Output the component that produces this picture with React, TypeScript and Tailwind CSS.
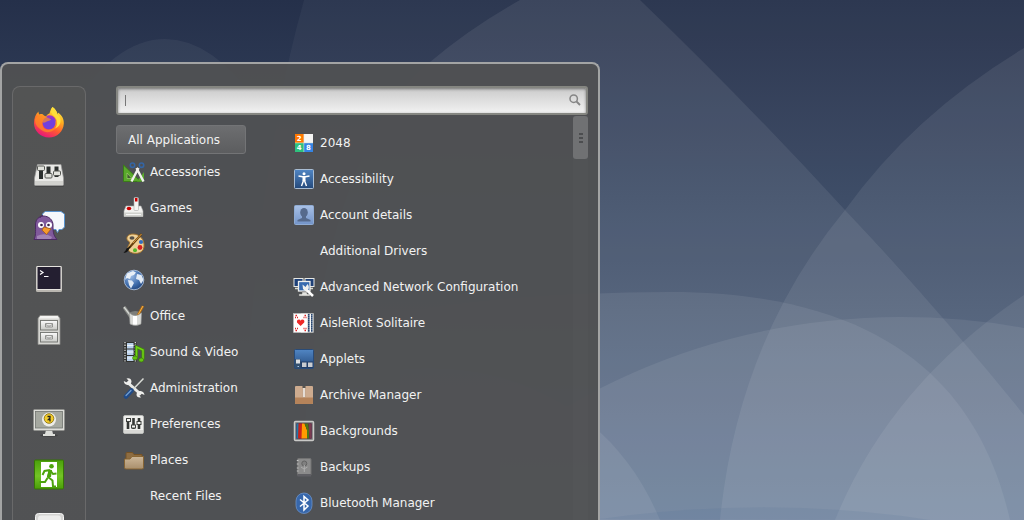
import type { ReactNode } from "react";

type Item = { label: string; icon?: ReactNode };

function Wallpaper() {
  return (
    <svg
      className="absolute inset-0 h-full w-full"
      viewBox="0 0 1024 520"
      preserveAspectRatio="none"
      aria-hidden="true"
    >
      <defs>
        <linearGradient id="sky" x1="0" y1="0" x2="0" y2="1">
          <stop offset="0" stopColor="#25304a" />
          <stop offset="0.38" stopColor="#374661" />
          <stop offset="0.6" stopColor="#42536e" />
          <stop offset="1" stopColor="#506788" />
        </linearGradient>
        <linearGradient id="steel" x1="0" y1="0" x2="0" y2="1">
          <stop offset="0" stopColor="#fafafa" />
          <stop offset="1" stopColor="#c9cac6" />
        </linearGradient>
        <linearGradient id="blue" x1="0" y1="0" x2="0" y2="1">
          <stop offset="0" stopColor="#5186c4" />
          <stop offset="1" stopColor="#24497b" />
        </linearGradient>
        <linearGradient id="pale" x1="0" y1="0" x2="0" y2="1">
          <stop offset="0" stopColor="#a9c1e6" />
          <stop offset="1" stopColor="#7394c9" />
        </linearGradient>
        <linearGradient id="fire" x1="0.8" y1="0" x2="0.3" y2="1">
          <stop offset="0" stopColor="#fff44f" />
          <stop offset="0.35" stopColor="#ffb01f" />
          <stop offset="0.65" stopColor="#ff5a30" />
          <stop offset="1" stopColor="#e5127f" />
        </linearGradient>
        <linearGradient id="green" x1="0" y1="0" x2="0" y2="1">
          <stop offset="0" stopColor="#4aa00a" />
          <stop offset="0.55" stopColor="#73c425" />
          <stop offset="1" stopColor="#4a9e08" />
        </linearGradient>
        <linearGradient id="folder" x1="0" y1="0" x2="0" y2="1">
          <stop offset="0" stopColor="#cdb799" />
          <stop offset="1" stopColor="#a98f6c" />
        </linearGradient>
        <radialGradient id="globe" cx="0.35" cy="0.3" r="0.8">
          <stop offset="0" stopColor="#9dbce6" />
          <stop offset="0.6" stopColor="#3f6cab" />
          <stop offset="1" stopColor="#1d3f75" />
        </radialGradient>
      </defs>
      <rect width="1024" height="520" fill="url(#sky)" />
      <g fill="#fff" fillOpacity="0.075">
        <path d="M304 0H1024V520H240Q250 190 304 0Z" fillOpacity="0.04" />
        <path d="M70 110Q115 39 165 39Q215 39 262 110Z" fillOpacity="0.05" />
        <path d="M520 0H640Q742 98 845 210Q936 306 1024 415V520H300Q310 160 430 62Q470 28 520 0Z" />
        <path d="M1024 48Q914 114 845 210Q738 340 720 520H1024Z" />
        <path d="M300 340Q430 293 670 292C910 292 985 410 1010 520H300Z" />
        <path d="M500 450Q680 318 900 317Q965 317 1024 328V520H500Z" />
        <path d="M1024 295Q890 385 835 520H1024Z" />
        <path d="M400 370C500 360 610 400 660 520H400Z" />
      </g>
      <path d="M600 519Q770 495 930 520Z" fill="#4d6c92" fillOpacity="0.12" />
    </svg>
  );
}

function Icon22({ children }: { children?: ReactNode }) {
  return (
    <svg className="size-[22px] shrink-0" viewBox="0 0 22 22" aria-hidden="true">
      {children}
    </svg>
  );
}

function Icon32({ children }: { children: ReactNode }) {
  return (
    <svg className="size-8 shrink-0" viewBox="0 0 32 32" aria-hidden="true">
      {children}
    </svg>
  );
}

const favorites: Item[] = [
  {
    label: "Firefox",
    icon: (
      <>
        <path
          d="M19.5 1C23 4 24 6 24.500 8.500C25 7.500 25 7 24.800 6.500C29 9 31 13 30.800 17.500C30.500 25.500 24 31.500 16 31.500C7.500 31.500 1 25 1 17C1 12 2.500 8.500 5.500 5.500C5.500 7 5.800 7.800 6.500 8.600C7.500 8 8.800 8 10 8.400C10.600 9 11 9.600 13 10.500C14.500 8 15.500 8 16.500 7.500C17 5 18 2.500 19.500 1Z"
          fill="url(#fire)"
        />
        <circle cx="16" cy="17" r="6.500" fill="#7140dd" />
        <path d="M13 10.200C18 7.500 23 11 23 16C21.500 13 18.500 11.500 16 12.500Z" fill="#9a35c8" />
        <path d="M2 13C5 9 10 9 13 10.500C14.500 12 17.500 12.500 18 13.500C17.500 15 14.500 14.500 13 16C11 17 10 17 9.500 16C8.500 21 12 24 15.500 23.700C19 23.500 21 22 24 20C21 27 12 28 7 23C3 20 2 17 2 13Z" fill="#ff8d24" fillOpacity="0.7" />
        <path d="M19.500 1C17 5 18 7.500 21 10C25 13.500 25 19 22 22.500C29 20 29 11.500 24.500 8.500C24 5.500 22.500 3 19.500 1Z" fill="#ffdf3a" />
      </>
    ),
  },
  {
    label: "Sound mixer",
    icon: (
      <>
        <rect x="2" y="27" width="29" height="2" rx="1" fill="#333" fillOpacity="0.4" />
        <path d="M4.500 6.500H28L30.500 20V26.500Q30.500 27.500 29.500 27.500H2.500Q1.500 27.500 1.500 26.500V20Z" fill="#e9e9e6" stroke="#999" strokeWidth="0.700" />
        <path d="M2 23H30V27H2Z" fill="#d2d2ce" />
        <path d="M8 10V21M15.500 8.500V19M23.500 8.500V19" stroke="#2c302f" strokeWidth="4" />
        <g fill="#e2e3dd" stroke="#555753" strokeWidth="1">
          <rect x="4.500" y="8" width="7" height="4.500" rx="1" />
          <rect x="12" y="15.500" width="7" height="4.500" rx="1" />
          <rect x="20.500" y="13" width="7" height="4.500" rx="1" />
        </g>
      </>
    ),
  },
  {
    label: "Pidgin",
    icon: (
      <>
        <path d="M12 1.500H28L31.500 4V17L29 19.500H26L24.500 22.500L23 19.500H12L9.500 16V4Z" fill="#f6f8fb" stroke="#5a94cf" strokeWidth="1" />
        <path d="M1 29.500C3 25 2.500 23 2.500 14C3 9 6 6.500 10 6C16 6 20 10 20 15C20 21 20 25 24 29.500Z" fill="#80599b" stroke="#4b2a63" strokeWidth="1" />
        <path d="M4 26Q12 22 19 27L18 29H4Z" fill="#a184b5" />
        <path d="M7 8Q7 5.500 10 5.500" stroke="#4b2a63" fill="none" />
        <circle cx="8" cy="15" r="3" fill="#fff" />
        <circle cx="16" cy="15" r="3" fill="#fff" />
        <circle cx="8.500" cy="15" r="1.300" fill="#3a2149" />
        <circle cx="15.500" cy="15" r="1.300" fill="#3a2149" />
        <path d="M11 17L18 19L13.500 24.500L9 20Z" fill="#f59a2e" stroke="#a85b09" strokeWidth="0.700" />
      </>
    ),
  },
  {
    label: "Terminal",
    icon: (
      <>
        <rect x="3" y="4" width="26" height="26" rx="1.500" fill="#b9b6b0" />
        <rect x="3.500" y="4" width="25" height="24" rx="1" fill="#e6e4df" />
        <rect x="4.500" y="5" width="23" height="22" fill="#241f31" />
        <path d="M7 8.500L10 10.500L7 12.500M11 14.500H15.500" fill="none" stroke="#fff" strokeWidth="1.200" />
      </>
    ),
  },
  {
    label: "Files",
    icon: (
      <>
        <path d="M7 1.500H25L27 4.500V30.500H5V4.500Z" fill="#d6d6d2" stroke="#8b8c88" strokeWidth="0.800" />
        <path d="M7.500 2H24.500L26 4.500H6Z" fill="#f3f3f1" />
        <g fill="url(#steel)" stroke="#70726e" strokeWidth="0.900">
          <rect x="7.500" y="6.500" width="17" height="9.500" />
          <rect x="7.500" y="18.500" width="17" height="9.500" />
        </g>
        <g fill="#eee" stroke="#80827e" strokeWidth="0.800">
          <path d="M12.500 9.500H19.500V13H12.500ZM12.500 10L14.500 12H17.500L19.500 10" />
          <path d="M12.500 21.500H19.500V25H12.500ZM12.500 22L14.500 24H17.500L19.500 22" />
        </g>
      </>
    ),
  },
];

const session: Item[] = [
  {
    label: "Lock screen",
    icon: (
      <>
        <ellipse cx="16" cy="29.500" rx="9" ry="1.500" fill="#222" fillOpacity="0.3" />
        <path d="M13 24H19L20 28H22V30H10V28H12Z" fill="#dddeda" />
        <rect x="0.500" y="3.500" width="31" height="21" rx="1" fill="#ddddd9" stroke="#8d8e8a" strokeWidth="0.800" />
        <rect x="2.500" y="5.500" width="27" height="16.500" fill="#a5a8a0" stroke="#727570" strokeWidth="0.800" />
        <circle cx="16" cy="13.500" r="7" fill="#edede9" />
        <circle cx="16" cy="12.500" r="4.800" fill="#f2cc2c" stroke="#8c7311" strokeWidth="0.900" />
        <path d="M14.500 10.500H17V12L15.500 13.500H17V15.500" fill="none" stroke="#222" strokeWidth="1.300" />
      </>
    ),
  },
  {
    label: "Log out",
    icon: (
      <>
        <rect x="1.500" y="2" width="29" height="29" rx="1" fill="url(#green)" stroke="#367506" />
        <rect x="8" y="4" width="16" height="25" fill="#fff" />
        <circle cx="18.500" cy="8.200" r="2.300" fill="#4da30d" />
        <path d="M17 12L11.500 13L9.500 17M17 12L15 19L19.500 22.500L20 28.500H23M17 12L20 16L23.500 15.500M14.500 20L12 24H6.500" fill="none" stroke="#4da30d" strokeWidth="2" />
        <path d="M15.500 12L19 12L18 19L14 19Z" fill="#4da30d" />
      </>
    ),
  },
  {
    label: "Shut down",
    icon: (
      <>
        <rect x="2.500" y="3.500" width="28" height="28" rx="3" fill="#d4d4d2" stroke="#f5f5f5" />
        <rect x="5" y="5.500" width="23" height="24" rx="3" fill="#ececeb" />
      </>
    ),
  },
];

const categories: Item[] = [
  {
    label: "Accessories",
    icon: (
      <>
        <path d="M0.500 4L17.500 20.500H0.500Z" fill="#59a92c" stroke="#3b7b18" />
        <path d="M14 20.500L21 11V20.500Z" fill="#59a92c" />
        <path d="M4 12L9 17.500H4Z" fill="#3f5d2e" stroke="#a1d06d" strokeWidth="0.700" />
        <path d="M13.500 7L20.500 20.500M15.500 7L8.500 20.500" stroke="#f0f0ee" strokeWidth="2.400" />
        <circle cx="9.500" cy="4.200" r="2.200" fill="none" stroke="#3465a4" strokeWidth="1.600" />
        <circle cx="18.500" cy="4.200" r="2.200" fill="none" stroke="#3465a4" strokeWidth="1.600" />
      </>
    ),
  },
  {
    label: "Games",
    icon: (
      <>
        <path d="M3 9H18L20 14V19.500H1V14Z" fill="#f2f2f0" stroke="#aaa" strokeWidth="0.600" />
        <path d="M1 15.500H20V19.500H1Z" fill="#cfd0cc" />
        <path d="M3 17.500H18" stroke="#f5f5f5" />
        <rect x="11" y="0.500" width="4.500" height="13" rx="1" fill="#f5f5f3" stroke="#aaa" strokeWidth="0.600" />
        <rect x="12" y="1" width="2.500" height="3.500" fill="#c00" />
        <ellipse cx="6" cy="11.500" rx="2.300" ry="1.700" fill="#c00" />
      </>
    ),
  },
  {
    label: "Graphics",
    icon: (
      <>
        <path d="M10 1C3 1 2.500 7 6 8.500C9 10 2 14 6 18C9 21.500 20 22 21 14C22 6 16 1 10 1Z" fill="#efd095" stroke="#9e702c" />
        <ellipse cx="9" cy="5" rx="2.500" ry="1.700" fill="#54504a" />
        <circle cx="15" cy="4.500" r="1.500" fill="#f7ead0" />
        <circle cx="18" cy="9" r="2.100" fill="#346fc0" />
        <circle cx="17" cy="14.500" r="2.400" fill="#d72020" />
        <circle cx="12" cy="17.300" r="2" fill="#55b52b" />
        <path d="M18.500 1L6 15" stroke="#6b430e" strokeWidth="2.200" />
        <path d="M18.500 1L10 10" stroke="#d59a43" strokeWidth="1" />
        <path d="M8 13L5 18Q3 20.500 0.500 19.500Q3 17.500 3.500 15.500Z" fill="#151515" />
      </>
    ),
  },
  {
    label: "Internet",
    icon: (
      <>
        <circle cx="11" cy="11" r="9.800" fill="url(#globe)" stroke="#b9cde9" strokeWidth="0.800" />
        <path d="M4 4.500L10 2L13 3.500L11 6L8 7L7 10L4 9L2 11Z" fill="#e9eff6" />
        <path d="M5 11L9 11.500L11 14L8 19.500L6 16Z" fill="#dfe8f3" />
        <path d="M14 5L18.500 6L20.500 11L18 15L16 11L13 10Z" fill="#e2eaf4" />
      </>
    ),
  },
  {
    label: "Office",
    icon: (
      <>
        <path d="M1 2L8 12" stroke="#868884" strokeWidth="3.500" />
        <path d="M1 2L7 10" stroke="#d5d7d3" strokeWidth="1.300" />
        <path d="M6.500 7.500Q12 4.500 18.500 7.500L18 10H7Z" fill="#7c7d7a" />
        <path d="M20 1L14 12" stroke="#b06a12" strokeWidth="2.600" />
        <path d="M20 1L15.500 9" stroke="#f4b34d" strokeWidth="1" />
        <path d="M6.500 8Q12 13 18.500 8L18 19Q12.500 22 7 19Z" fill="#d9dad7" stroke="#9b9c98" strokeWidth="0.600" />
        <path d="M10 11H14V19.500H10Z" fill="#fff" />
      </>
    ),
  },
  {
    label: "Sound & Video",
    icon: (
      <>
        <rect x="0.500" y="1" width="13" height="20" fill="#30312f" />
        <path d="M2 1V21M12.300 1V21" stroke="#e9e9e9" strokeWidth="1.200" strokeDasharray="1.300 1.300" />
        <path d="M4 2H10.500V7.500H4ZM4 8.500H10.500V14H4ZM4 15H10.500V20H4Z" fill="#b8cfe9" />
        <path d="M4 4.500H10.500M4 11H10.500M4 17H10.500" stroke="#eff4fa" />
        <path d="M13.500 17V6L20 9V18.500" fill="none" stroke="#3f8d07" strokeWidth="3" />
        <path d="M13.500 17V6L20 9V18.500" fill="none" stroke="#73d216" strokeWidth="1.500" />
        <ellipse cx="12" cy="17" rx="2.500" ry="2" fill="#65c414" stroke="#367506" strokeWidth="0.600" />
        <ellipse cx="18.200" cy="19" rx="2.500" ry="2" fill="#65c414" stroke="#367506" strokeWidth="0.600" />
      </>
    ),
  },
  {
    label: "Administration",
    icon: (
      <>
        <path d="M4 5L18 17.500" stroke="#e9eae7" strokeWidth="3" />
        <path d="M3.500 1.500Q8 0.500 8.500 4.500Q8 8.500 4.500 8Q1 7.500 0.800 4L4 5.500L5.500 3.500Z" fill="#eeeeec" />
        <path d="M18 20.500Q13.500 21 13.500 17.500Q14 13.500 17.500 14Q21 14.500 21.500 18L18 16.500L16.500 18.500Z" fill="#eeeeec" />
        <path d="M20.500 1.500L8 14.500" stroke="#d9dcd7" strokeWidth="1.500" />
        <path d="M8.500 13.500L3 19.500" stroke="#204a87" strokeWidth="4.500" strokeLinecap="round" />
        <path d="M8 13.500L3 18.500" stroke="#729fcf" strokeWidth="1.200" strokeLinecap="round" />
      </>
    ),
  },
  {
    label: "Preferences",
    icon: (
      <>
        <rect x="0.500" y="2.500" width="20" height="18" rx="1.500" fill="#efefed" stroke="#c2c3bf" strokeWidth="0.800" />
        <path d="M1 17H20V20H1Z" fill="#d8d8d5" />
        <path d="M5 5V16M10.500 5V16M16 5V16" stroke="#333634" strokeWidth="2.600" />
        <g fill="#f5f5f3" stroke="#3d403d">
          <rect x="3.500" y="5.500" width="4" height="3" />
          <rect x="8.500" y="12" width="4" height="3" />
          <rect x="14" y="8.500" width="4" height="3" />
        </g>
      </>
    ),
  },
  {
    label: "Places",
    icon: (
      <>
        <path d="M3 18V4.500Q3 3.500 4 3.500H9.500L11 5.500H19V18Z" fill="#8e6d42" stroke="#755225" />
        <path d="M1.500 10H7L9 7.500H20.500V18.500Q20.500 20 19 20H3Q1.500 20 1.500 18.500Z" fill="url(#folder)" stroke="#86622f" strokeWidth="0.900" />
      </>
    ),
  },
  { label: "Recent Files" },
];

const applications: Item[] = [
  {
    label: "2048",
    icon: (
      <>
        <rect x="2" y="2" width="18" height="18" fill="#d9e3dd" />
        <rect x="2" y="2" width="8.600" height="8.600" fill="#ff7800" />
        <rect x="11.200" y="2" width="8.800" height="8.600" fill="#f6f5f4" />
        <rect x="2" y="11.200" width="8.600" height="8.800" fill="#2ec27e" />
        <rect x="11.200" y="11.200" width="8.800" height="8.800" fill="#3584e4" />
        <g fill="#fff" fontFamily="DejaVu Sans" fontWeight="700" fontSize="7" textAnchor="middle">
          <text x="6.300" y="8.700">2</text>
          <text x="6.300" y="18.200">4</text>
          <text x="15.500" y="18.200">8</text>
        </g>
      </>
    ),
  },
  {
    label: "Accessibility",
    icon: (
      <>
        <rect x="1.500" y="1.500" width="19" height="19" rx="1" fill="url(#blue)" stroke="#a9bdd3" />
        <circle cx="11" cy="5.700" r="1.500" fill="#fff" />
        <path d="M5.500 8L11 9L16.500 8M11 9V13M10.700 12L8.500 18M11.300 12L13.500 18" stroke="#fff" strokeWidth="1.400" fill="none" />
        <path d="M9.500 8H12.500V13H9.500Z" fill="#fff" />
      </>
    ),
  },
  {
    label: "Account details",
    icon: (
      <>
        <rect x="1.500" y="1.500" width="19" height="19" rx="1" fill="url(#pale)" stroke="#8fabd3" />
        <ellipse cx="11" cy="8.500" rx="3.800" ry="4.500" fill="#566a8c" />
        <path d="M9 12H13V14L17.500 16V17.500H4.500V16L9 14Z" fill="#566a8c" />
      </>
    ),
  },
  { label: "Additional Drivers" },
  {
    label: "Advanced Network Configuration",
    icon: (
      <>
        <path d="M2 12.500H8M14 12.500H20" stroke="#d3d7cf" strokeWidth="1.500" />
        <rect x="1" y="2.500" width="9" height="8" fill="#1e4077" stroke="#e7e8e4" />
        <rect x="12" y="2.500" width="9" height="8" fill="#1e4077" stroke="#e7e8e4" />
        <rect x="5.500" y="5.500" width="11.500" height="9.500" fill="#376aaf" stroke="#eeeeec" strokeWidth="1.300" />
        <path d="M9 16H14V18H17V20H6V18H9Z" fill="#e3e4e0" stroke="#666" strokeWidth="0.500" />
        <path d="M12.500 13L20 20" stroke="#fff" strokeWidth="2.500" />
        <path d="M9.500 8.500L12.500 11L14.500 8Q17 11 15 14Q12 16 10 13Z" fill="#f0f0ee" />
      </>
    ),
  },
  {
    label: "AisleRiot Solitaire",
    icon: (
      <>
        <rect x="8" y="1.500" width="12.500" height="19" fill="#f7f7f6" stroke="#b8b8b8" strokeWidth="0.500" />
        <path d="M15.800 2V20M18.800 2V20" stroke="#26446f" strokeWidth="1.600" strokeDasharray="1.700 0.300" />
        <rect x="0.500" y="1.500" width="14" height="19" fill="#fff" stroke="#c4c4c4" strokeWidth="0.500" />
        <path d="M7.600 14L4 10.500Q3.500 7.500 6 7.500Q7.200 7.500 7.600 8.800Q8 7.500 9.500 7.500Q12 7.800 11.200 10.500Z" fill="#ef2929" />
        <path d="M2.500 3.500H4M11.500 3.500H13M2.500 18.500H4M11.500 18.500H13M2 5.500H3M4 5.500H5M10.500 5.500H11.500M12.500 5.500H13.500M2 16.500H3M4 16.500H5M10.500 16.500H11.500M12.500 16.500H13.500" stroke="#d22" strokeWidth="1.300" />
      </>
    ),
  },
  {
    label: "Applets",
    icon: (
      <>
        <rect x="1.500" y="1.500" width="19" height="19" rx="1" fill="url(#blue)" stroke="#294b78" />
        <path d="M2 13.500H20V20H2Z" fill="#223f69" />
        <path d="M2 11H7.500V20H2Z" fill="#34506f" />
        <rect x="3" y="11.500" width="4" height="4" fill="#dcdfe3" />
        <rect x="9" y="14.500" width="4.500" height="4.500" fill="#c9ccd0" />
        <rect x="15" y="14.500" width="4.500" height="4.500" fill="#c9ccd0" />
        <path d="M4.500 18.500H6" stroke="#a9c7ea" />
      </>
    ),
  },
  {
    label: "Archive Manager",
    icon: (
      <>
        <rect x="2" y="2" width="18" height="18" rx="1" fill="#cdab8f" />
        <path d="M2 13.500H20V19Q20 20 19 20H3Q2 20 2 19Z" fill="#b5835a" />
        <path d="M11 2V13.500" stroke="#b39c89" strokeWidth="2.500" />
        <path d="M11 4V13" stroke="#f2eeea" strokeWidth="1.600" />
        <rect x="9.500" y="2" width="3" height="2" fill="#595550" />
      </>
    ),
  },
  {
    label: "Backgrounds",
    icon: (
      <>
        <rect x="1.500" y="1.500" width="19" height="19" rx="1" fill="#777" stroke="#c9c9c7" strokeWidth="1.500" />
        <rect x="3.500" y="3.500" width="15" height="15" fill="#303" />
        <rect x="3.500" y="3.500" width="2.500" height="15" fill="#2178a8" />
        <path d="M5.500 3.500H9.500V18.500H5Z" fill="#c8231c" />
        <path d="M9 3.500H11.500L14 10V18.500H8.500Z" fill="#ff9b00" />
        <path d="M11.500 3.500H15.500L16.500 18.500H14V10Z" fill="#4b7816" />
        <path d="M15.500 3.500H18.500V18.500H16.500Z" fill="#7a3c50" />
      </>
    ),
  },
  {
    label: "Backups",
    icon: (
      <>
        <rect x="4.500" y="2.500" width="13.500" height="17" rx="1" fill="#8b8b8b" stroke="#737373" />
        <path d="M4.500 18H18V20.500H4.500Z" fill="#5f5f64" />
        <path d="M3.800 4.500H5.500M3.800 8H5.500M3.800 12H5.500M3.800 15H5.500" stroke="#c5c5c5" />
        <circle cx="11.300" cy="7.500" r="2.500" fill="#808080" stroke="#636363" />
        <path d="M11.300 9V16M8 11L11 13L14.500 11" stroke="#adadad" strokeWidth="1" fill="none" />
      </>
    ),
  },
  {
    label: "Bluetooth Manager",
    icon: (
      <>
        <rect x="3" y="1" width="16" height="20.500" rx="8" fill="#3767ab" stroke="#6c92c7" strokeWidth="0.800" />
        <path d="M7 7.500L15 14L11 18V4.500L15 8L7 14.500" fill="none" stroke="#fff" strokeWidth="1.500" />
      </>
    ),
  },
];

function FavoriteButton({ item }: { item: Item }) {
  return (
    <button type="button" aria-label={item.label} className="block">
      <Icon32>{item.icon}</Icon32>
    </button>
  );
}

function MenuRow({ item }: { item: Item }) {
  return (
    <li>
      <button
        type="button"
        className="flex h-9 w-full items-center gap-[5px] pl-[7px] text-left whitespace-nowrap"
      >
        <Icon22>{item.icon}</Icon22>
        {item.label}
      </button>
    </li>
  );
}

function SearchBox() {
  return (
    <div className="relative h-[29px]">
      <input
        type="text"
        aria-label="Search"
        className="h-full w-full rounded-[3px] border-2 border-[#858681] bg-linear-to-b from-[#cbcbcb] to-[#f2f2f2] pr-7 pl-2 text-xs text-gray-700 shadow-[inset_0_1px_3px_rgba(0,0,0,0.45)] outline-none"
      />
      <span className="absolute top-[9px] left-[9px] h-[11px] w-px bg-[#777]" />
      <svg
        className="absolute top-2 right-[7px] size-3"
        viewBox="0 0 12 12"
        fill="none"
        stroke="#858585"
        aria-hidden="true"
      >
        <circle cx="4.700" cy="4.700" r="3.700" strokeWidth="1.500" />
        <path d="M7.500 7.500L11 11" strokeWidth="1.800" />
      </svg>
    </div>
  );
}

function ScrollBar() {
  return (
    <div className="w-[15px] shrink-0 bg-white/1">
      <div className="flex h-[43px] flex-col items-center justify-center gap-0.5 rounded-[3px] bg-[#707173]">
        <span className="h-0.5 w-1 bg-[#4c4d4f]" />
        <span className="h-0.5 w-1 bg-[#4c4d4f]" />
        <span className="h-0.5 w-1 bg-[#4c4d4f]" />
      </div>
    </div>
  );
}

export default function App() {
  return (
    <div className="relative h-screen overflow-hidden bg-[#374661] pt-[62px] font-['DejaVu_Sans',sans-serif] text-xs text-[#f2f2f2]">
      <Wallpaper />
      <main className="relative flex w-[600px] max-w-full gap-[30px] rounded-t-lg border-2 border-b-0 border-[#a3a4a4] bg-[#505153]/97 px-[10px] pt-[22px]">
        <nav
          aria-label="Favorites"
          className="flex w-[74px] shrink-0 flex-col items-center gap-5 rounded-t-lg border border-b-0 border-[#69696a] bg-linear-to-b from-[#535454] to-[#515254] pt-[19px]"
        >
          {favorites.map((item) => (
            <FavoriteButton key={item.label} item={item} />
          ))}
          <div className="mt-10 flex flex-col gap-5">
            {session.map((item) => (
              <FavoriteButton key={item.label} item={item} />
            ))}
          </div>
        </nav>

        <div className="min-w-0 flex-1">
          <SearchBox />
          <div className="mt-px flex">
            <div className="w-[130px] shrink-0 pt-[9px]">
              <button
                type="button"
                className="h-[29px] w-full rounded-[3px] border border-[#737476] bg-linear-to-b from-[#6d6e70] to-[#5c5d5f] pl-[11px] text-left"
              >
                All Applications
              </button>
              <ul>
                {categories.map((item) => (
                  <MenuRow key={item.label} item={item} />
                ))}
              </ul>
            </div>
            <ul className="ml-10 min-w-0 flex-1 pt-[9px]">
              {applications.map((item) => (
                <MenuRow key={item.label} item={item} />
              ))}
            </ul>
            <ScrollBar />
          </div>
        </div>
      </main>
    </div>
  );
}
